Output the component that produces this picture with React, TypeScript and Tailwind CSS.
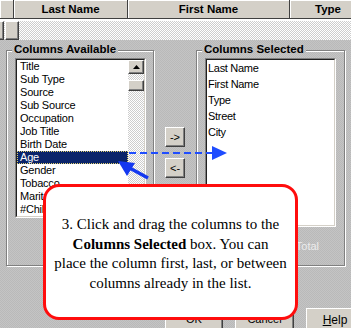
const dialogBg =
  'bg-[image:repeating-conic-gradient(#c4c4c4_0_25%,#b9b9b9_0_50%)] bg-[length:2px_2px]'
const lightDither =
  'bg-[image:repeating-conic-gradient(#ffffff_0_25%,#cdcdcd_0_50%)] bg-[length:2px_2px]'
const raised =
  'border border-t-white border-l-white border-b-[#404040] border-r-[#404040] bg-[#d4d0c8] shadow-[inset_-1px_-1px_0_#808080]'
const etched = 'border border-[#808080] shadow-[1px_1px_0_#fff,inset_1px_1px_0_#fff]'

const available = [
  'Title',
  'Sub Type',
  'Source',
  'Sub Source',
  'Occupation',
  'Job Title',
  'Birth Date',
  'Age',
  'Gender',
  'Tobacco',
  'Marital Status',
  '#Children',
]

const selected = ['Last Name', 'First Name', 'Type', 'Street', 'City']

function Sunken({ className, children }: { className: string; children: React.ReactNode }) {
  return (
    <div className={`border border-t-[#808080] border-l-[#808080] border-b-white border-r-white ${className}`}>
      <div className="h-full w-full border border-t-[#202020] border-l-[#202020] border-b-[#d4d0c8] border-r-[#d4d0c8] bg-white">
        {children}
      </div>
    </div>
  )
}

function GroupBox({ label, className, children }: { label: string; className: string; children: React.ReactNode }) {
  return (
    <div className={`relative ${etched} ${className}`}>
      <span className={`absolute left-[5px] -top-[9px] px-[2px] text-[11.5px] font-bold leading-[15px] text-black ${dialogBg}`}>
        {label}
      </span>
      {children}
    </div>
  )
}

export default function App() {
  return (
    <div className="relative h-[328px] w-[351px] overflow-hidden font-['Liberation_Sans',Arial,sans-serif] text-black">
      {/* Grid header */}
      <div className="flex h-[19px] border-b border-[#404040] bg-[#d4d0c8] text-[11.5px] font-bold leading-[18px]">
        <div className="w-[14px] shrink-0 border-r border-[#404040] shadow-[inset_1px_1px_0_#fff]" />
        <div className="w-[114px] shrink-0 border-r border-[#404040] text-center shadow-[inset_1px_1px_0_#fff]">Last Name</div>
        <div className="w-[162px] shrink-0 border-r border-[#404040] text-center shadow-[inset_1px_1px_0_#fff]">First Name</div>
        <div className="w-[76px] shrink-0 text-center shadow-[inset_1px_1px_0_#fff]">Type</div>
      </div>

      {/* Grid first row */}
      <div className={`flex h-[21px] gap-[1px] border-t-2 border-white ${lightDither}`}>
        <div className={`-ml-[12px] h-[19px] w-[16px] ${raised}`} />
        <div className={`h-[19px] w-[14px] ${raised}`} />
      </div>

      {/* Dialog */}
      <div className={`flex h-[288px] flex-col ${dialogBg}`}>
        <div className="flex items-start pt-[10px]">
          <GroupBox label="Columns Available" className="ml-[6px] h-[216px] w-[148px] pl-[8px] pt-[7px]">
            <Sunken className="h-[160px] w-[131px]">
              <div className="flex h-full">
                <div className="flex-1 text-[11px] leading-[13px] tracking-[-0.2px]">
                  {available.map((item) =>
                    item === 'Age' ? (
                      <div key={item} className="h-[13px] border border-dotted border-[#e0d070] bg-[#0a246a] pl-[2px] leading-[11px] text-white">
                        {item}
                      </div>
                    ) : (
                      <div key={item} className="h-[13px] pl-[3px]">
                        {item}
                      </div>
                    ),
                  )}
                </div>
                <div className={`flex w-[16px] flex-col ${lightDither}`}>
                  <div className={`flex h-[14px] items-center justify-center ${raised}`}>
                    <svg width="7" height="4" viewBox="0 0 7 4">
                      <polygon points="3.5,0 7,4 0,4" fill="#000" />
                    </svg>
                  </div>
                  <div className={`mt-[6px] h-[11px] ${raised}`} />
                  <div className="flex-1" />
                  <div className={`flex h-[14px] items-center justify-center ${raised}`}>
                    <svg width="7" height="4" viewBox="0 0 7 4">
                      <polygon points="0,0 7,0 3.5,4" fill="#000" />
                    </svg>
                  </div>
                </div>
              </div>
            </Sunken>
          </GroupBox>

          <div className="flex w-[42px] shrink-0 flex-col gap-[11px] pl-[11px] pt-[77px]">
            <div className={`flex h-[20px] w-[20px] items-center justify-center text-[11px] leading-none ${raised}`}>-&gt;</div>
            <div className={`flex h-[20px] w-[20px] items-center justify-center text-[11px] leading-none ${raised}`}>&lt;-</div>
          </div>

          <GroupBox label="Columns Selected" className="h-[216px] w-[149px] pl-[8px] pt-[7px]">
            <Sunken className="h-[169px] w-[131px]">
              <div className="pl-[1px] text-[11px] leading-[16px] tracking-[-0.3px]">
                {selected.map((item) => (
                  <div key={item} className="h-[16px]">
                    {item}
                  </div>
                ))}
              </div>
            </Sunken>
            <div className="mt-[13px] flex justify-end pr-[25px] text-[11px] leading-[13px] text-[#ececec]">Sub Total</div>
          </GroupBox>
        </div>

        <div className="mt-[42px] flex gap-[12px] pl-[165px] text-[11px]">
          <div className={`flex h-[23px] w-[58px] shrink-0 items-center justify-center ${raised}`}>OK</div>
          <div className={`flex h-[23px] w-[59px] shrink-0 items-center justify-center ${raised}`}>Cancel</div>
          <div className={`flex h-[23px] w-[58px] shrink-0 items-center justify-center text-[12px] ${raised}`}>
            <span>
              <span className="underline">H</span>elp
            </span>
          </div>
        </div>
      </div>

      {/* Drag indicators */}
      <svg className="pointer-events-none absolute inset-0" width="351" height="328">
        <line x1="129" y1="153" x2="213" y2="153" stroke="#1f4dff" strokeWidth="2" strokeDasharray="7 4" />
        <polygon points="212,146 227,153 212,160" fill="#1f4dff" />
        <line x1="148" y1="178" x2="126" y2="166" stroke="#1438f0" strokeWidth="3.5" />
        <polygon points="118,161 135,163 127,176" fill="#1438f0" />
      </svg>

      {/* Callout */}
      <div className="absolute left-[43px] top-[184px] h-[136px] w-[255px] rounded-[16px] border-[3px] border-[#ff0d0d] bg-white pt-[28px] text-center font-['Liberation_Serif','Times_New_Roman',serif] text-[15px] leading-[19.6px] text-black">
        3. Click and drag the columns to the
        <br />
        <span className="font-bold">Columns Selected</span> box. You can
        <br />
        place the column first, last, or between
        <br />
        columns already in the list.
      </div>
    </div>
  )
}
